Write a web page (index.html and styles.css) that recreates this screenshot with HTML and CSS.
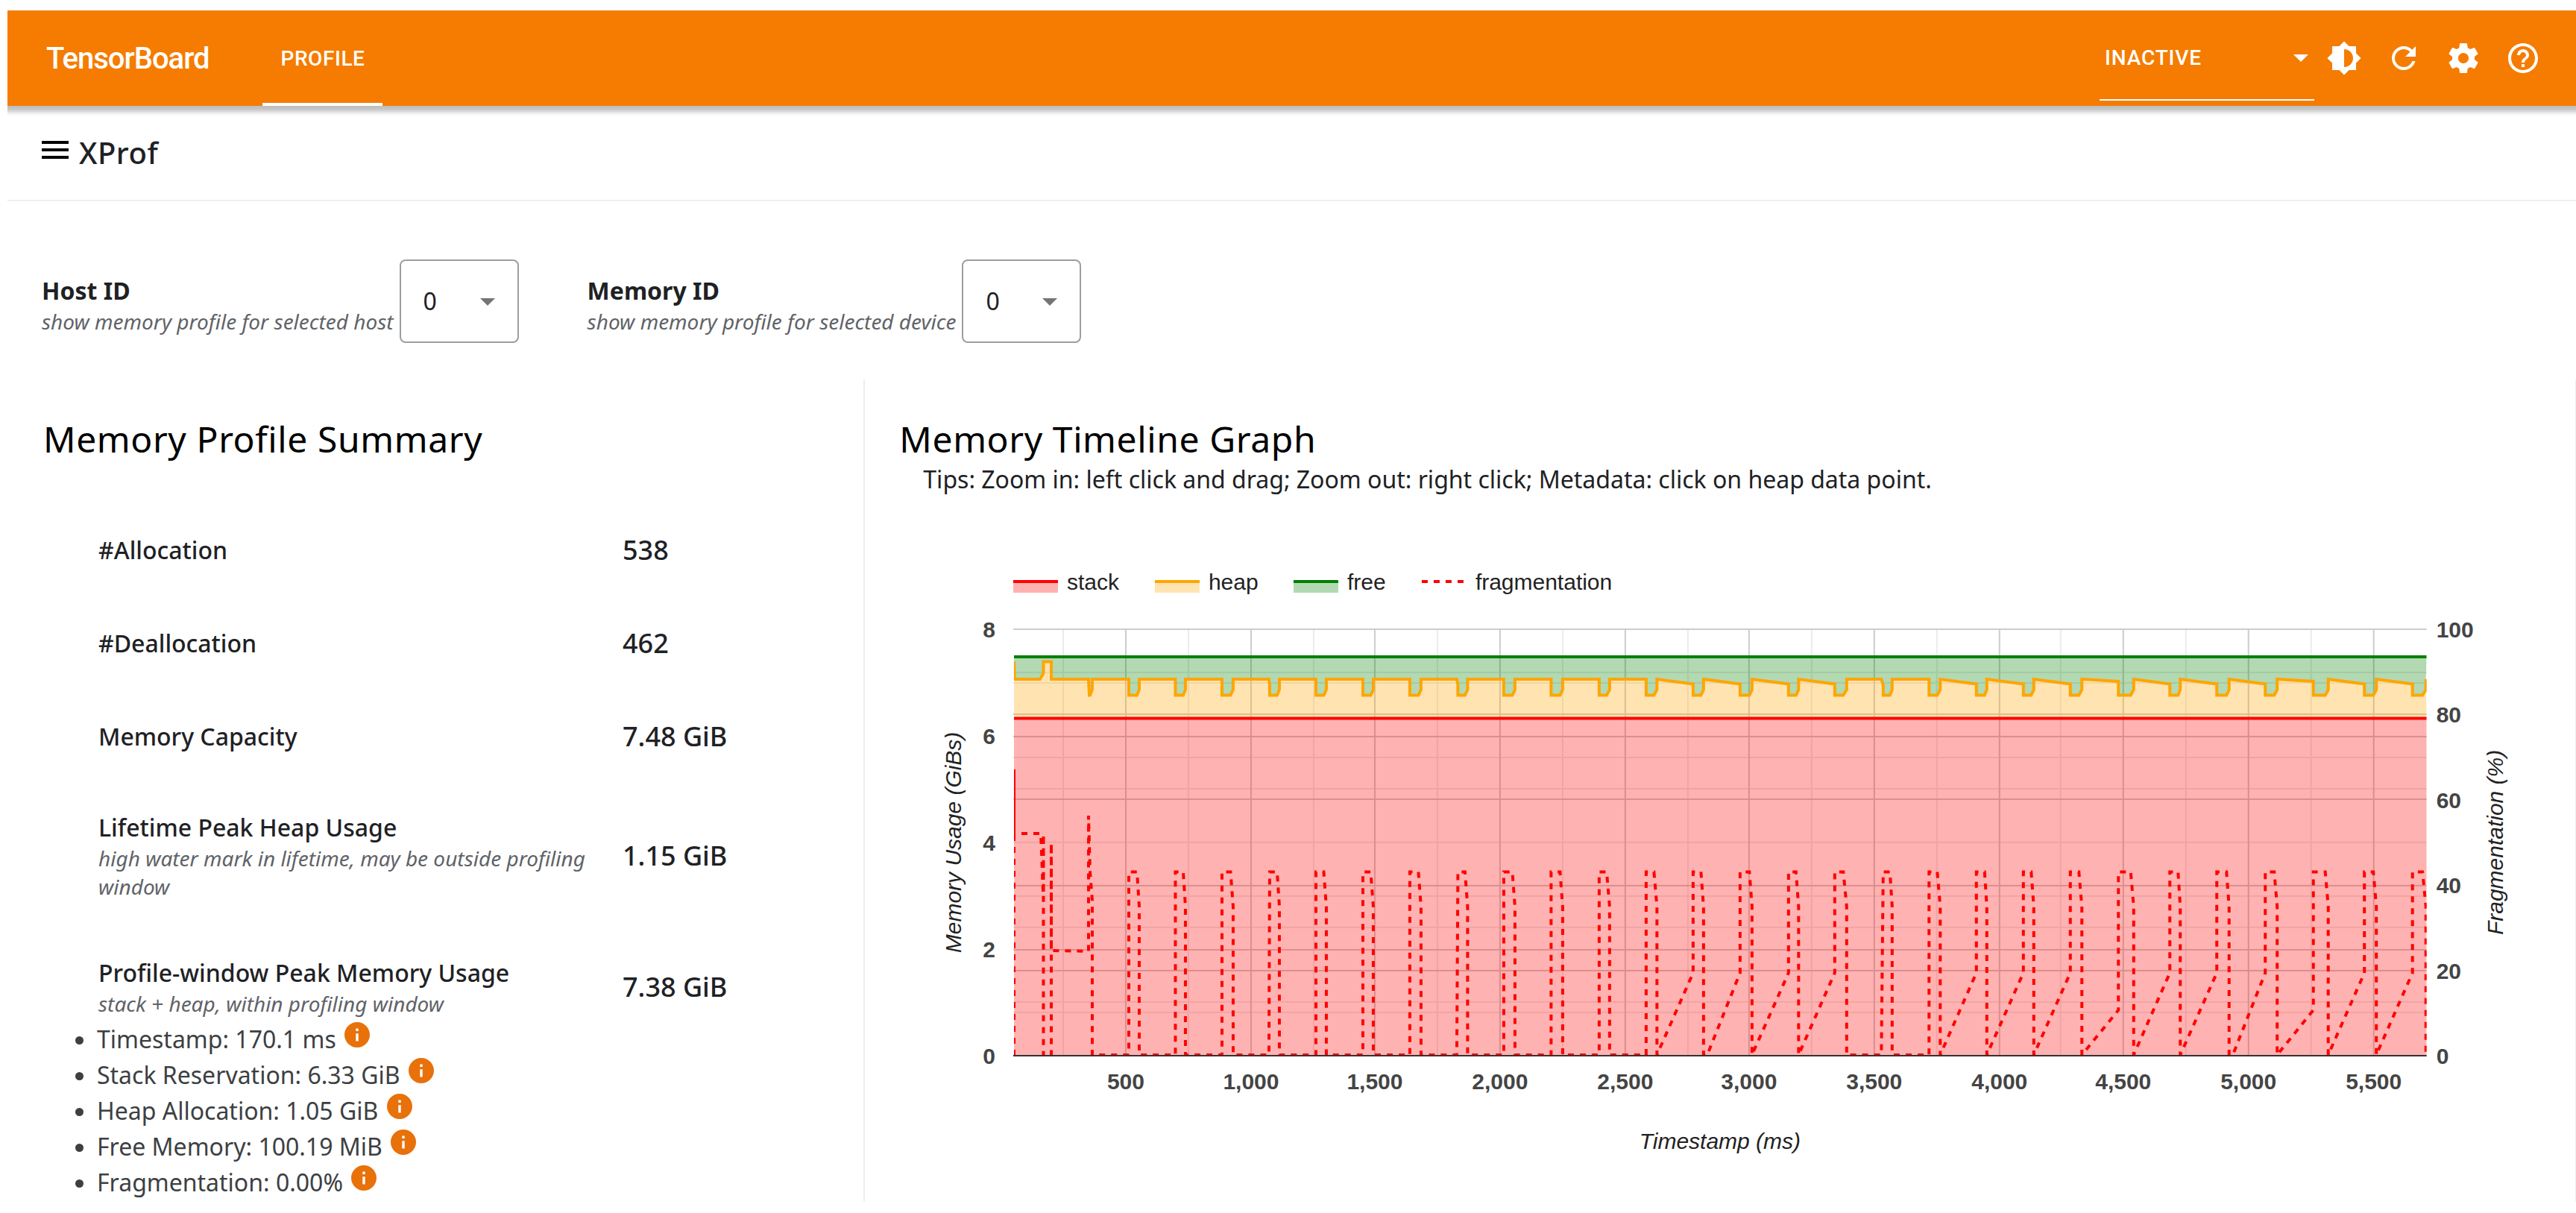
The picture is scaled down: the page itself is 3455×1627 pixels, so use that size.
FILE: index.html
```html
<!DOCTYPE html>
<html lang="en">
<head>
<meta charset="utf-8">
<title>TensorBoard</title>
<link rel="stylesheet" href="styles.css">
</head>
<body>
<header class="topbar">
  <h1 class="brand">TensorBoard</h1>
  <nav class="tabs"><a class="tab" href="#profile" aria-current="page">PROFILE</a></nav>
  <div class="actions">
    <div class="run-state">
      <select class="run-select" aria-label="Inactive dashboards"><option>INACTIVE</option></select>
      <svg class="arrow" viewBox="0 0 20 10" aria-hidden="true"><path d="M0 0h20L10 10z"/></svg>
    </div>
    <button class="icon-btn" type="button" aria-label="Theme"><svg viewBox="0 0 24 24"><path d="M20 15.31L23.31 12 20 8.69V4h-4.69L12 .69 8.69 4H4v4.69L.69 12 4 15.31V20h4.69L12 23.31 15.31 20H20v-4.69zM12 18V6c3.31 0 6 2.69 6 6s-2.69 6-6 6z"/></svg></button>
    <button class="icon-btn" type="button" aria-label="Reload"><svg viewBox="0 0 24 24"><path d="M17.65 6.35C16.2 4.9 14.21 4 12 4c-4.42 0-7.99 3.58-7.99 8s3.57 8 7.99 8c3.73 0 6.84-2.55 7.73-6h-2.08c-.82 2.33-3.04 4-5.65 4-3.31 0-6-2.69-6-6s2.69-6 6-6c1.66 0 3.14.69 4.22 1.78L13 11h7V4l-2.35 2.35z"/></svg></button>
    <button class="icon-btn" type="button" aria-label="Settings"><svg viewBox="0 0 24 24"><path d="M19.43 12.98c.04-.32.07-.64.07-.98s-.03-.66-.07-.98l2.11-1.65c.19-.15.24-.42.12-.64l-2-3.46c-.12-.22-.39-.3-.61-.22l-2.49 1c-.52-.4-1.08-.73-1.69-.98l-.38-2.65C14.46 2.18 14.25 2 14 2h-4c-.25 0-.46.18-.49.42l-.38 2.65c-.61.25-1.17.59-1.69.98l-2.49-1c-.23-.09-.49 0-.61.22l-2 3.46c-.13.22-.07.49.12.64l2.11 1.65c-.04.32-.07.65-.07.98s.03.66.07.98l-2.11 1.65c-.19.15-.24.42-.12.64l2 3.46c.12.22.39.3.61.22l2.49-1c.52.4 1.08.73 1.69.98l.38 2.65c.03.24.24.42.49.42h4c.25 0 .46-.18.49-.42l.38-2.65c.61-.25 1.17-.59 1.69-.98l2.49 1c.23.09.49 0 .61-.22l2-3.46c.12-.22.07-.49-.12-.64l-2.11-1.65zM12 15.5c-1.93 0-3.5-1.57-3.5-3.5s1.57-3.5 3.5-3.5 3.5 1.57 3.5 3.5-1.57 3.5-3.5 3.5z"/></svg></button>
    <a class="icon-btn" href="#help" aria-label="Help"><svg viewBox="0 0 24 24"><path d="M11 18h2v-2h-2v2zm1-16C6.48 2 2 6.48 2 12s4.48 10 10 10 10-4.48 10-10S17.52 2 12 2zm0 18c-4.41 0-8-3.59-8-8s3.59-8 8-8 8 3.59 8 8-3.59 8-8 8zm0-14c-2.21 0-4 1.79-4 4h2c0-1.1.9-2 2-2s2 .9 2 2c0 2-3 1.75-3 5h2c0-2.25 3-2.5 3-5 0-2.21-1.79-4-4-4z"/></svg></a>
  </div>
</header>

<main class="page">
  <div class="toolbar">
    <button class="menu-btn" type="button" aria-label="Menu"><svg viewBox="0 0 24 24"><path d="M3 18h18v-2H3v2zm0-5h18v-2H3v2zm0-7v2h18V6H3z"/></svg></button>
    <h2 class="product">XProf</h2>
  </div>

  <form class="controls">
    <div class="control">
      <label class="control-label" for="host"><b>Host ID</b><i>show memory profile for selected host</i></label>
      <div class="picker">
        <select id="host"><option>0</option></select>
        <svg class="arrow" viewBox="0 0 20 10" aria-hidden="true"><path d="M0 0h20L10 10z"/></svg>
      </div>
    </div>
    <div class="control">
      <label class="control-label" for="memory"><b>Memory ID</b><i>show memory profile for selected device</i></label>
      <div class="picker">
        <select id="memory"><option>0</option></select>
        <svg class="arrow" viewBox="0 0 20 10" aria-hidden="true"><path d="M0 0h20L10 10z"/></svg>
      </div>
    </div>
  </form>

  <div class="panels">
    <section class="panel summary">
      <h3 class="panel-title">Memory Profile Summary</h3>
      <dl class="stats">
        <div class="stat"><dt>#Allocation</dt><dd>538</dd></div>
        <div class="stat"><dt>#Deallocation</dt><dd>462</dd></div>
        <div class="stat"><dt>Memory Capacity</dt><dd>7.48 GiB</dd></div>
        <div class="stat"><dt>Lifetime Peak Heap Usage<i>high water mark in lifetime, may be outside profiling window</i></dt><dd>1.15 GiB</dd></div>
        <div class="stat"><dt>Profile-window Peak Memory Usage<i>stack + heap, within profiling window</i></dt><dd>7.38 GiB</dd></div>
      </dl>
      <ul class="details">
        <li>Timestamp: 170.1 ms <svg class="info" viewBox="2 2 20 20"><path d="M12 2C6.48 2 2 6.48 2 12s4.48 10 10 10 10-4.48 10-10S17.52 2 12 2zm1 15h-2v-6h2v6zm0-8h-2V7h2v2z"/></svg></li>
        <li>Stack Reservation: 6.33 GiB <svg class="info" viewBox="2 2 20 20"><path d="M12 2C6.48 2 2 6.48 2 12s4.48 10 10 10 10-4.48 10-10S17.52 2 12 2zm1 15h-2v-6h2v6zm0-8h-2V7h2v2z"/></svg></li>
        <li>Heap Allocation: 1.05 GiB <svg class="info" viewBox="2 2 20 20"><path d="M12 2C6.48 2 2 6.48 2 12s4.48 10 10 10 10-4.48 10-10S17.52 2 12 2zm1 15h-2v-6h2v6zm0-8h-2V7h2v2z"/></svg></li>
        <li>Free Memory: 100.19 MiB <svg class="info" viewBox="2 2 20 20"><path d="M12 2C6.48 2 2 6.48 2 12s4.48 10 10 10 10-4.48 10-10S17.52 2 12 2zm1 15h-2v-6h2v6zm0-8h-2V7h2v2z"/></svg></li>
        <li>Fragmentation: 0.00% <svg class="info" viewBox="2 2 20 20"><path d="M12 2C6.48 2 2 6.48 2 12s4.48 10 10 10 10-4.48 10-10S17.52 2 12 2zm1 15h-2v-6h2v6zm0-8h-2V7h2v2z"/></svg></li>
      </ul>
    </section>

    <section class="panel graph">
      <h3 class="panel-title">Memory Timeline Graph</h3>
      <p class="tips">Tips: Zoom in: left click and drag; Zoom out: right click; Metadata: click on heap data point.</p>
      <div class="chart-wrap">
        <svg class="chart" viewBox="-150 -84 2210 800" role="img" aria-label="Memory usage and fragmentation over time">
          <defs><clipPath id="plot"><rect x="0" y="0" width="1895" height="573"/></clipPath></defs>
          <g id="legend" class="legend"></g>
          <g id="grid"></g>
          <g id="series" clip-path="url(#plot)"></g>
          <path class="baseline" d="M-1 572H1895"/>
          <g id="ticks" class="ticks"></g>
          <g class="axis-titles">
            <text x="947" y="697">Timestamp (ms)</text>
            <text transform="translate(-71 286) rotate(-90)">Memory Usage (GiBs)</text>
            <text transform="translate(1997 286) rotate(-90)">Fragmentation (%)</text>
          </g>
        </svg>
      </div>
    </section>
  </div>
</main>
<script src="chart.js"></script>
</body>
</html>
```
FILE: styles.css
```css
* {
  box-sizing: border-box;
}

body {
  margin: 0;
  padding: 14px 0 0 10px;
  background: #fff;
  color: #202124;
  font-family: "Noto Sans", sans-serif;
  font-size: 32px;
  line-height: 44px;
}

h1, h2, h3, p, dl, dd, ul {
  margin: 0;
}

svg {
  display: block;
  fill: currentColor;
}

button, select {
  margin: 0;
  border: 0;
  background: none;
  color: inherit;
  font: inherit;
}

select {
  appearance: none;
}

/* Top bar */
.topbar {
  position: relative;
  display: flex;
  align-items: center;
  height: 128px;
  padding: 0 47px 0 52px;
  background: #f57c00;
  color: #fff;
  font-family: Roboto, sans-serif;
  box-shadow: 0 2px 6px 6px rgba(0, 0, 0, 0.25);
  clip-path: inset(0 0 -20px 0);
}

.brand {
  padding-top: 2px;
  font-size: 40px;
  font-weight: 500;
  letter-spacing: -0.025em;
}

.tabs {
  margin-left: 72px;
  align-self: stretch;
  display: flex;
}

.tab {
  display: flex;
  align-items: center;
  padding: 6px 24px 0;
  border-bottom: 4px solid #fff;
  color: inherit;
  font-size: 28px;
  font-weight: 500;
  letter-spacing: 0.02em;
  text-decoration: none;
}

.actions {
  display: flex;
  align-items: center;
  gap: 32px;
  margin-left: auto;
}

.run-state {
  position: relative;
  width: 288px;
  height: 114px;
  margin-right: -16px;
  border-bottom: 2px solid #fff;
}

.run-select {
  width: 100%;
  height: 100%;
  padding: 2px 7px 0;
  font-size: 28px;
  font-weight: 500;
  letter-spacing: 0.03em;
}

.arrow {
  position: absolute;
  top: 50%;
  right: 32px;
  width: 20px;
  height: 10px;
  margin-top: -4px;
  color: #757575;
  pointer-events: none;
}

.run-state .arrow {
  right: 8px;
  color: #fff;
}

.icon-btn {
  width: 48px;
  height: 48px;
  padding: 0;
  color: inherit;
}

/* Toolbar */
.toolbar {
  display: flex;
  padding: 35px 46px;
  border-bottom: 2px solid #eee;
}

.menu-btn {
  width: 48px;
  height: 48px;
  padding: 0;
  color: #000;
  margin-left: -6px;
}

.product {
  margin-left: 8px;
  font-size: 40px;
  font-weight: 500;
  letter-spacing: 0.0125em;
  line-height: 56px;
}

/* Selectors */
.controls {
  display: flex;
  gap: 92px;
  padding: 78px 46px 49px;
}

.control {
  display: flex;
  gap: 8px;
}

.control-label {
  padding-top: 20px;
}

.control-label b,
.control-label i {
  display: block;
}

.control-label i,
.stat i {
  display: block;
  color: #5f6368;
  font-size: 28px;
  font-weight: 400;
  line-height: 38px;
}

.picker {
  position: relative;
}

.picker select {
  width: 160px;
  height: 112px;
  padding: 0 30px;
  border: 2px solid #9e9e9e;
  border-radius: 8px;
}

/* Panels */
.panels {
  display: grid;
  grid-template-columns: 1fr 2fr;
}

.panel {
  padding: 48px 34px 2px 48px;
}

.panel.graph {
  padding-left: 46px;
  border-left: 2px solid #eee;
  border-right: 1px solid #eee;
}

.panel-title {
  color: #000;
  font-size: 48px;
  font-weight: 400;
  letter-spacing: 0.0125em;
  line-height: 64px;
}

.stats {
  display: grid;
  gap: 75px;
  padding: 92px 0 5px 74px;
}

.stat {
  display: grid;
  grid-template-columns: 656px 1fr;
  column-gap: 47px;
  align-items: center;
  min-height: 50px;
  font-weight: 500;
}

.stat dd {
  font-size: 36px;
}

.details {
  padding-left: 72px;
  color: #3c4043;
  line-height: 48px;
}

.info {
  display: inline-block;
  width: 34px;
  height: 34px;
  margin-left: 3px;
  vertical-align: 1px;
  color: #e8710a;
}

.tips {
  padding-left: 32px;
}

.chart-wrap {
  padding: 95px 0 0 4px;
}

.chart {
  width: 100%;
  font-family: "Liberation Sans", Arial, sans-serif;
  font-size: 30px;
}

/* Chart parts */
.major { fill: #ccc; }
.minor { fill: #ebebeb; }
.baseline { stroke: #333; stroke-width: 2; }
.legend text { fill: #222; }
.ticks { fill: #444; font-weight: 700; text-anchor: middle; }
.ticks .left { text-anchor: end; }
.ticks .right { text-anchor: start; }
.axis-titles { fill: #222; font-style: italic; text-anchor: middle; }
.area { fill-opacity: 0.3; }
.line { fill: none; stroke-width: 4; }
.dashed { stroke-dasharray: 8; }
```
FILE: chart.js
```js
const svgNS = 'http://www.w3.org/2000/svg';
const byId = (id) => document.getElementById(id);

function add(parent, tag, attrs, text) {
  const el = document.createElementNS(svgNS, tag);
  for (const key in attrs) el.setAttribute(key, attrs[key]);
  if (text) el.textContent = text;
  parent.appendChild(el);
}

const W = 1895, H = 572;
const STACK = 119.5, FREE = 37;
const HIGH = 67, LOW = 88.5, STEP = 81;

// Each allocation cycle: [drop x, plateau end, recovery x, fragmentation % before the drop, lead, rest]
const cycles = [
  [154, 165, 168, 0], [216.5, 227, 230, 0], [279, 290.5, 294, 0], [343, 353, 356, 0, 1],
  [405, 415.5, 419, 0], [468, 478.5, 482, 0], [531, 542.5, 546, 0], [595.5, 605, 608.5, 0, 1.5],
  [657, 668.5, 672, 0], [720.5, 732.5, 736, 0], [785, 795, 799, 0], [848, 858.5, 862.5, 0],
  [911, 921.5, 925, 20], [974, 986.5, 990, 20, 0, 5], [1039, 1049, 1052.5, 20], [1101, 1112.5, 1117, 20],
  [1166, 1175, 1178, 0, 2.5], [1227.5, 1238.5, 1242.5, 0], [1291, 1302, 1305, 20], [1354, 1364.5, 1368, 20],
  [1417, 1428.5, 1432.5, 20], [1481.5, 1498, 1502, 10], [1550.5, 1561.5, 1564.5, 20], [1613.5, 1626.5, 1630, 20],
  [1678.5, 1690.5, 1694.5, 20, 0, 5], [1743, 1759, 1763, 10], [1811.5, 1823.5, 1827.5, 20], [1876, 1889.5, 1894, 20]
];

// Gridlines
const grid = byId('grid');
const hLine = (y, cls) => add(grid, 'rect', { class: cls, x: -1, y: y - 1, width: W + 1, height: 2 });
const vLine = (x, cls) => add(grid, 'rect', { class: cls, x: x - 1, y: 0, width: 2, height: H });
[66, 234, 402, 568, 736, 904, 1070, 1238, 1404, 1572, 1740].forEach((x) => vLine(x, 'minor'));
[58, 72, 172, 214, 286, 358, 400, 500, 514].forEach((y) => hLine(y, 'minor'));
[150, 318, 484, 652, 820, 986, 1154, 1322, 1488, 1656, 1824].forEach((x, i) => {
  vLine(x, 'major');
  add(byId('ticks'), 'text', { x, y: 617 }, ((i + 1) * 500).toLocaleString('en-US'));
});
[0, 144, 430, 114, 228, 344, 458].forEach((y) => hLine(y, 'major'));

[8, 6, 4, 2, 0].forEach((v) => add(byId('ticks'), 'text', { class: 'left', x: -25, y: 583 - v * 71.5 }, String(v)));
[100, 80, 60, 40, 20, 0].forEach((v) => add(byId('ticks'), 'text', { class: 'right', x: 1908, y: 583 - v * 5.72 }, String(v)));

// Heap and fragmentation outlines
let heap = `0,43 1,${HIGH} 35,${HIGH} 39.5,59 39.5,43.5 50,43.5 50,${HIGH} 100,${HIGH} 101,${LOW} 102,${LOW} 105,${STEP} 105,${HIGH}`;
let frag = 'M0 572V188V274H36L39.5 364V275V572H50V287V431L100 432V250L102 325L105 364V571';
for (const [a, b, c, before, lead = 0, rest = 0] of cycles) {
  const top = before === 20 ? 73.5 : before === 10 ? 70 : HIGH;
  const from = before === 20 ? 461 : before === 10 ? 511 : 571;
  heap += ` ${a - lead},${top} ${a},${top + (lead ? 8 : 0)} ${a},${LOW} ${b},${LOW} ${c},${STEP} ${c},${HIGH}`;
  frag += `${rest ? `h${rest}` : ''}L${a - lead} ${from}L${a} 325.5H${b}L${c} 372V571`;
}
const series = byId('series');
add(series, 'path', { class: 'area', fill: 'red', d: `M0 ${STACK}H${W}V${H}H0z` });
add(series, 'polygon', { class: 'area', fill: 'orange', points: `${heap} ${W},${STACK} 0,${STACK}` });
add(series, 'polygon', { class: 'area', fill: 'green', points: `${heap} ${W},${FREE} 0,${FREE}` });
add(series, 'path', { class: 'line', stroke: 'red', d: `M0 ${STACK}H${W}` });
add(series, 'polyline', { class: 'line', stroke: 'orange', points: heap });
add(series, 'path', { class: 'line', stroke: 'green', d: `M0 ${FREE}H${W}` });
add(series, 'path', { class: 'line dashed', stroke: 'red', d: frag });

// Legend
[['stack', 'red', -1], ['heap', 'orange', 189], ['free', 'green', 375], ['fragmentation', 'red', 547]].forEach(([name, color, x], i) => {
  const g = byId('legend');
  if (i < 3) add(g, 'rect', { class: 'area', fill: color, x, y: -64, width: 60, height: 15 });
  add(g, 'path', { class: i < 3 ? 'line' : 'line dashed', stroke: color, d: `M${x} -64h60` });
  add(g, 'text', { x: x + 72, y: -53 }, name);
});
```
